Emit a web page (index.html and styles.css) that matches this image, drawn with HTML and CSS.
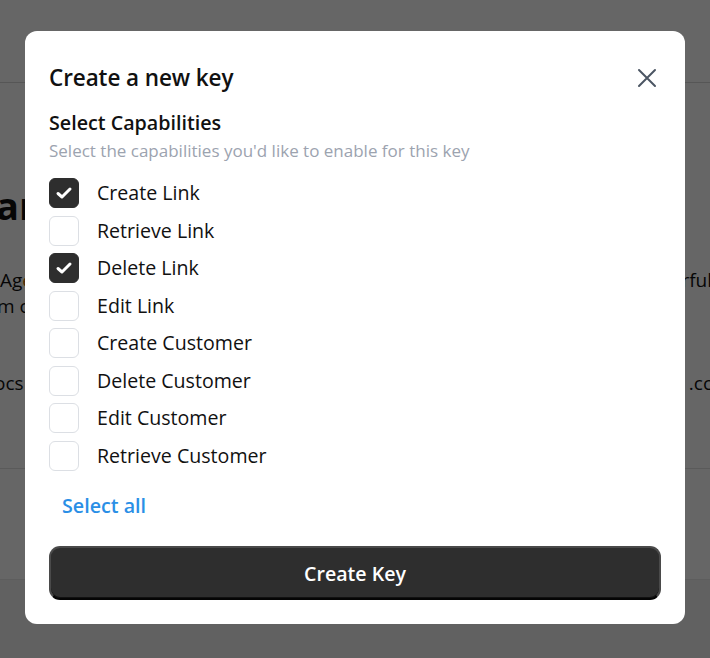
FILE: index.html
```html
<!DOCTYPE html>
<html lang="en">
<head>
<meta charset="utf-8">
<title>Create a new key</title>
<link rel="stylesheet" href="styles.css">
</head>
<body>
<div class="page">
  <header class="topbar"></header>
  <main class="content">
    <div class="row heading"><span class="frag-left">ar</span></div>
    <div class="row para1"><span class="frag-left">Ag<span class="accent">e</span></span><span class="frag-right">rful</span></div>
    <div class="row para2"><span class="frag-left">m c</span></div>
    <div class="row para3"><span class="frag-left">ocs</span><span class="frag-right">.cc</span></div>
  </main>
  <section class="band"></section>
  <footer class="foot"></footer>
</div>

<div class="overlay"></div>

<div class="modal" role="dialog" aria-labelledby="modal-title">
  <div class="modal-head">
    <h2 id="modal-title" class="modal-title">Create a new key</h2>
    <button class="close" aria-label="Close">
      <svg width="20" height="20" viewBox="0 0 20 20"><path d="M2 2 L18 18 M18 2 L2 18" stroke="#4b5563" stroke-width="2" stroke-linecap="round" fill="none"/></svg>
    </button>
  </div>
  <h3 class="section-title">Select Capabilities</h3>
  <p class="section-sub">Select the capabilities you'd like to enable for this key</p>
  <ul class="caps">
    <li class="cap"><span class="box checked"><svg width="20" height="20" viewBox="0 0 20 20"><path d="M4 10.5 L8 14 L16 6" stroke="#fff" stroke-width="3" fill="none" stroke-linecap="round" stroke-linejoin="round"/></svg></span><span class="cap-label">Create Link</span></li>
    <li class="cap"><span class="box"></span><span class="cap-label">Retrieve Link</span></li>
    <li class="cap"><span class="box checked"><svg width="20" height="20" viewBox="0 0 20 20"><path d="M4 10.5 L8 14 L16 6" stroke="#fff" stroke-width="3" fill="none" stroke-linecap="round" stroke-linejoin="round"/></svg></span><span class="cap-label">Delete Link</span></li>
    <li class="cap"><span class="box"></span><span class="cap-label">Edit Link</span></li>
    <li class="cap"><span class="box"></span><span class="cap-label">Create Customer</span></li>
    <li class="cap"><span class="box"></span><span class="cap-label">Delete Customer</span></li>
    <li class="cap"><span class="box"></span><span class="cap-label">Edit Customer</span></li>
    <li class="cap"><span class="box"></span><span class="cap-label">Retrieve Customer</span></li>
  </ul>
  <button class="select-all">Select all</button>
  <button class="create">Create Key</button>
</div>
</body>
</html>
```

FILE: styles.css
```css
* { box-sizing: border-box; }
html, body { margin: 0; padding: 0; }
body {
  width: 710px;
  height: 658px;
  overflow: hidden;
  font-family: "Open Sans", "Noto Sans", sans-serif;
  background: #fff;
  color: #111;
}
.page { display: flex; flex-direction: column; height: 658px; }
.topbar { height: 83px; border-bottom: 1px solid #d6d6d6; flex: none; }
.content { height: 386px; flex: none; border-bottom: 1px solid #e0e0e0; padding-top: 96px; }
.row { display: flex; justify-content: space-between; white-space: nowrap; }
.heading { font-size: 38px; font-weight: 700; height: 52px; margin-left: -4px; line-height: 52px; }
.para1 { font-size: 19px; margin-top: 36px; height: 26px; line-height: 26px; }
.para2 { font-size: 19px; height: 26px; line-height: 26px; margin-left: -3px; }
.para3 { font-size: 19px; margin-top: 51px; height: 26px; line-height: 26px; margin-left: -6px; }
.frag-right { margin-right: -2px; }
.accent { color: #c76b00; }
.band { height: 111px; flex: none; border-bottom: 1px solid #e8e8e8; }
.foot { flex: 1; background: #f3f3f3; }

.overlay {
  position: fixed;
  inset: 0;
  background: rgba(0, 0, 0, 0.6);
}

.modal {
  position: fixed;
  left: 25px;
  top: 31px;
  width: 660px;
  height: 593px;
  background: #fff;
  border-radius: 12px;
  padding: 33px 24px 24px 24px;
  display: flex;
  flex-direction: column;
  color: #111;
  font-family: "Open Sans", "Noto Sans", sans-serif;
}
.modal-head { display: flex; align-items: center; justify-content: space-between; height: 28px; }
.modal-title { margin: 0; font-size: 22.5px; font-weight: 600; line-height: 28px; color: #111; letter-spacing: -0.1px; }
.close { border: 0; background: none; padding: 0; width: 20px; height: 20px; margin-right: 4px; display: flex; }
.section-title { margin: 18px 0 0; font-size: 19.7px; font-weight: 600; line-height: 26px; color: #111; }
.section-sub { margin: 4px 0 0; font-size: 17px; line-height: 22px; color: #9ca3af; }
.caps { list-style: none; margin: 16px 0 0; padding: 0; display: flex; flex-direction: column; gap: 7.5px; }
.cap { display: flex; align-items: center; height: 30px; gap: 18px; }
.box {
  width: 30px; height: 30px; border-radius: 6px;
  border: 1px solid #dcdfe4; background: #fff;
  display: flex; align-items: center; justify-content: center; flex: none;
}
.box.checked { background: #2e2e2e; border-color: #2e2e2e; }
.cap-label { font-size: 19.6px; color: #111; line-height: 26px; }
.select-all {
  align-self: flex-start;
  margin: 21.5px 0 0 13px;
  padding: 0;
  border: 0; background: none;
  font-family: inherit;
  font-size: 19.7px; font-weight: 600; line-height: 28px;
  color: #2a8fe6;
}
.create {
  margin-top: 26px;
  height: 54px;
  width: 612px;
  border-radius: 11px;
  background: #2e2e2e;
  border: 2px solid #4a4a4a;
  border-bottom-color: #050505;
  box-shadow: inset 0 -1px 0 #111;
  color: #fff;
  font-family: inherit;
  font-size: 19.6px;
  font-weight: 600;
}
```
